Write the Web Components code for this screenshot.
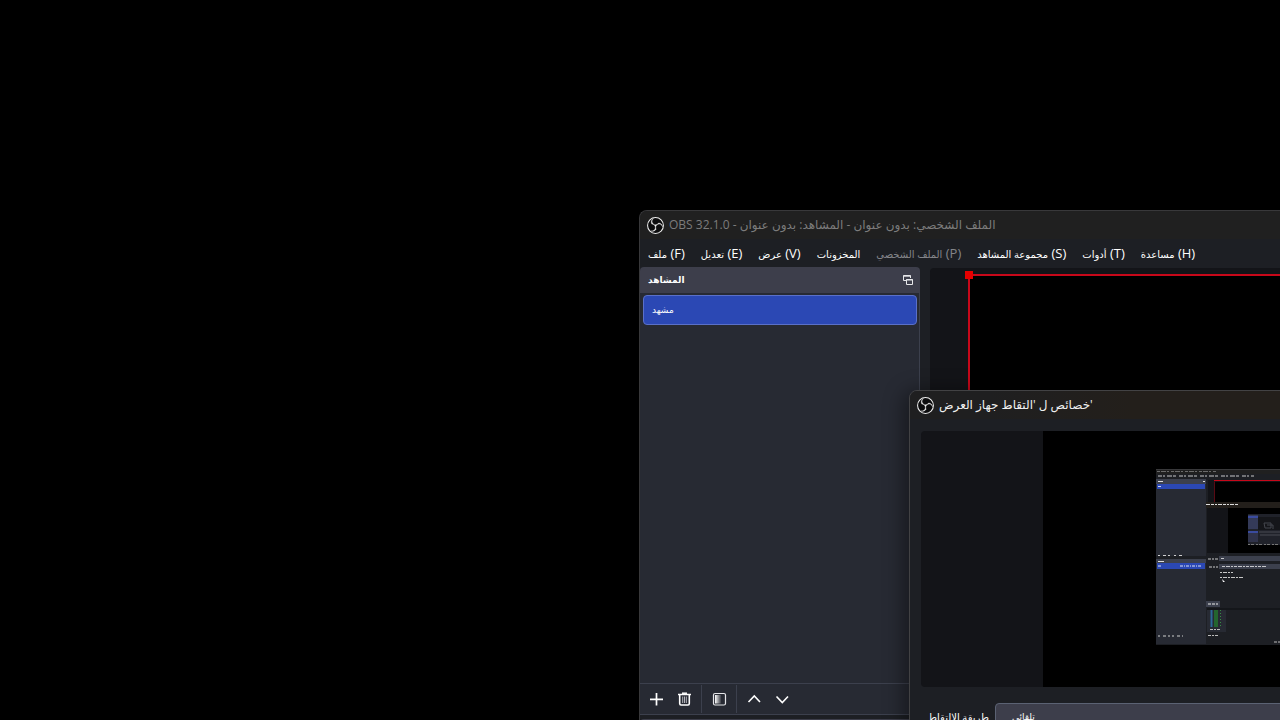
<!DOCTYPE html>
<html lang="ar" dir="ltr">
<head>
<meta charset="utf-8">
<title>OBS</title>
<style>
  html, body { margin: 0; height: 100%; background: #000; overflow: hidden; }
  body { font: 13px/20px "Open Sans", "DejaVu Sans", sans-serif; color: #fefefe; }
</style>
</head>
<body>
<obs-desktop>
  <obs-window>
    <window-title slot="title" muted>OBS 32.1.0 - <bdi dir="rtl">الملف الشخصي: بدون عنوان - المشاهد: بدون عنوان</bdi></window-title>
    <menu-bar slot="menu">
      <menu-item key="(F)">ملف</menu-item>
      <menu-item key="(E)">تعديل</menu-item>
      <menu-item key="(V)">عرض</menu-item>
      <menu-item>المخزونات</menu-item>
      <menu-item key="(P)" disabled>الملف الشخصي</menu-item>
      <menu-item key="(S)">مجموعة المشاهد</menu-item>
      <menu-item key="(T)">أدوات</menu-item>
      <menu-item key="(H)">مساعدة</menu-item>
    </menu-bar>
    <scenes-dock slot="dock" heading="المشاهد"><scene-row>مشهد</scene-row></scenes-dock>
    <canvas-preview></canvas-preview>
  </obs-window>
  <properties-dialog slot="dialog"></properties-dialog>
</obs-desktop>

<script>
function define(name, html, setup) {
  const t = document.createElement('template');
  t.innerHTML = html;
  customElements.define(name, class extends HTMLElement {
    constructor() {
      super();
      this.attachShadow({ mode: 'open' }).append(t.content.cloneNode(true));
    }
    connectedCallback() { if (setup) setup(this, this.shadowRoot); }
  });
}

define('obs-desktop', `
<style>
  :host { display: grid; grid-template-columns: 1fr 1fr; height: 100vh; padding-top: 210px; box-sizing: border-box; position: relative; overflow: hidden; background: #000; }
  .main { grid-column: 2; min-width: 0; margin-left: -1px; }
  .over { position: absolute; left: calc(50% + 269px); right: -40px; top: 390px; }
</style>
<div class="main"><slot></slot></div>
<div class="over"><slot name="dialog"></slot></div>`);

define('obs-window', `
<style>
  :host { display: block; }
  section { display: flex; flex-direction: column; height: 560px; border: 1px solid #38383a; border-right: 0; border-radius: 8px 0 0 0; overflow: hidden; background: #1d1f24; box-sizing: border-box; }
  .body { flex: 1; display: flex; gap: 10px; min-height: 0; }
</style>
<section>
  <slot name="title"></slot>
  <slot name="menu"></slot>
  <div class="body"><slot name="dock"></slot><slot></slot></div>
</section>`);

define('obs-logo', `
<style>:host { display: block; width: 17px; height: 17px; flex: none; } svg { display: block; }</style>
<svg width="17" height="17" viewBox="0 0 24 24" aria-hidden="true">
  <circle cx="12" cy="12" r="11.2" fill="#0c0c0d" stroke="#ececec" stroke-width="1.5"/>
  <path fill="#f4f4f4" stroke="#f4f4f4" stroke-width=".5" d="M6.182,5.99c0.352-1.698,1.503-3.229,3.05-3.996c-0.269,0.273-0.595,0.483-0.844,0.78c-1.02,1.1-1.48,2.692-1.199,4.156c0.355,2.235,2.455,4.06,4.732,4.028c1.765,0.079,3.485-0.937,4.348-2.468c1.848,0.063,3.645,1.017,4.7,2.548c0.54,0.799,0.962,1.736,0.991,2.711c-0.342-1.295-1.202-2.446-2.375-3.095c-1.135-0.639-2.529-0.802-3.772-0.425c-1.56,0.448-2.849,1.723-3.293,3.293c-0.377,1.25-0.216,2.628,0.377,3.772c-0.825,1.429-2.315,2.449-3.932,2.756c-1.244,0.261-2.551,0.059-3.709-0.464c1.036,0.302,2.161,0.355,3.191-0.011c1.381-0.457,2.522-1.567,3.024-2.935c0.556-1.49,0.345-3.261-0.591-4.54c-0.7-1.007-1.803-1.717-3.002-1.969c-0.38-0.068-0.764-0.098-1.148-0.134c-0.611-1.231-0.834-2.66-0.528-3.996z"/>
</svg>`);

define('window-title', `
<style>
  :host { display: flex; align-items: center; gap: 5px; height: 28px; padding-left: 7px; font-size: 12px; white-space: nowrap; background: #202020; color: #f0f0f0; }
  :host([muted]) { color: #7c7c7c; }
  :host([warm]) { background: linear-gradient(90deg, #1f1f20 80px, #231f1b 220px); }
</style>
<obs-logo></obs-logo><span><slot></slot></span>`);

define('menu-bar', `
<style>
  :host { display: block; background: #1d1f24; }
  nav { display: flex; gap: 16px; height: 28px; align-items: center; padding-left: 8px; }
</style>
<nav><slot></slot></nav>`);

define('menu-item', `
<style>
  :host { display: block; flex: none; }
  button { font: inherit; font-size: 13px; line-height: 20px; color: #fefefe; background: none; border: 0; padding: 0; white-space: nowrap; display: block; direction: ltr; }
  button:disabled { color: #84858a; }
  .ar { font-size: 10px; }
</style>
<button type="button"><span class="ar"><slot></slot></span><span class="key"></span></button>`, (host, root) => {
  const key = host.getAttribute('key');
  root.querySelector('.key').textContent = key ? ' ' + key : '';
  root.querySelector('button').disabled = host.hasAttribute('disabled');
});

define('scenes-dock', `
<style>
  :host { display: flex; flex-direction: column; width: 280px; flex: none; box-sizing: border-box; }
  header { display: flex; justify-content: space-between; align-items: center; height: 26px; padding: 0 6px 0 8px; background: #3d3e4b; border-radius: 4px 4px 0 0; }
  h2 { margin: 0; font-size: 9px; line-height: 20px; font-weight: 700; }
  header button { padding: 0; border: 0; background: none; display: block; }
  svg { display: block; }
  .list { height: 386px; border: solid #3c404d; border-width: 0 1px 1px 0; padding: 2px 2px 2px 3px; background: #272a33; box-sizing: content-box; }
  .tools { display: flex; align-items: center; height: 30px; padding-left: 2px; border: solid #3c404d; border-width: 0 1px 1px 0; background: #272a33; }
  .tools button { width: 28px; height: 28px; padding: 0; border: 0; background: none; display: grid; place-items: center; }
  .tools i { width: 1px; height: 28px; background: #3c404d; margin: 0 3px; }
  .next { margin-top: 4px; height: 40px; background: #3d3e4b; border-radius: 4px 4px 0 0; }
</style>
<header>
  <h2></h2>
  <button type="button" aria-label="فصل"><svg width="12" height="12" viewBox="0 0 12 12" fill="none" stroke="#e6e7ea"><path d="M4 6.5H1.5V1.5H8.5V4M1 2.2H9" /><path d="M4.5 5.5H10.5V10.5H4.5ZM4 6H11"/></svg></button>
</header>
<div class="list"><slot></slot></div>
<div class="tools">
  <button type="button" aria-label="إضافة"><svg width="16" height="16" viewBox="0 0 16 16" stroke="#fefefe" stroke-width="1.700"><path d="M8.500 2V14.500M2 8.300H15"/></svg></button>
  <button type="button" aria-label="حذف"><svg width="16" height="16" viewBox="0 0 16 16" fill="none" stroke="#fefefe"><path stroke-width="1.600" d="M2 3.500H15M3.700 4V12.500Q3.700 14 5 14H12Q13.300 14 13.300 12.500V4"/><path stroke-width="1.500" d="M6 2.200H11"/><path stroke="#b4b5bc" d="M6.700 5.500V12M8.500 5.500V12M10.300 5.500V12"/></svg></button>
  <i></i>
  <button type="button" aria-label="مرشحات"><svg width="16" height="16" viewBox="0 0 16 16"><defs><linearGradient id="g"><stop offset="0" stop-color="#fff"/><stop offset="1" stop-color="#fff" stop-opacity=".1"/></linearGradient></defs><rect x="2.500" y="2.500" width="12" height="11.500" rx="1.500" fill="none" stroke="#e4e5e8" stroke-width="1.200"/><rect x="4" y="4" width="6" height="8.500" fill="url(#g)"/></svg></button>
  <i></i>
  <button type="button" aria-label="أعلى"><svg width="16" height="16" viewBox="0 0 16 16" fill="none" stroke="#fefefe" stroke-width="1.600"><path d="M2.500 11L8.300 5L14 11"/></svg></button>
  <button type="button" aria-label="أسفل"><svg width="16" height="16" viewBox="0 0 16 16" fill="none" stroke="#fefefe" stroke-width="1.600"><path d="M2.500 5.500L8.300 11.500L14 5.500"/></svg></button>
</div>
<div class="next"></div>`, (host, root) => {
  root.querySelector('h2').textContent = host.getAttribute('heading');
});

define('scene-row', `
<style>
  :host { display: block; }
  button { display: block; width: 100%; height: 30px; padding: 0 8px; text-align: left; font: inherit; font-size: 9px; line-height: 20px; color: #fefefe; background: #2b48b4; border: 1px solid #5a70c8; border-radius: 4px; }
</style>
<button type="button" aria-pressed="true"><slot></slot></button>`);

define('canvas-preview', `
<style>
  :host { display: block; flex: 1; min-width: 0; background: #131418; border-radius: 4px 0 0 0; margin-top: 1px; padding: 6px 0 0 38px; }
  .frame { position: relative; height: 400px; background: #000; border: solid #c8081a; border-width: 2px 0 0 2px; box-sizing: border-box; }
  .handle { position: absolute; left: -5px; top: -5px; width: 8px; height: 8px; background: #e60000; }
</style>
<div class="frame"><div class="handle"></div></div>`);

define('mini-capture', `
<style>:host { display: block; } svg { display: block; }</style>
<svg width="132" height="176" viewBox="0 0 132 176" aria-hidden="true">
  <rect width="132" height="176" fill="#1d1f24"/>
  <rect width="132" height="5" fill="#202020"/>
  <path d="M0 .5H132" stroke="#38383a"/>
  <path d="M1 2.500H60" stroke="#6b6b6b" stroke-dasharray="3 1 5 1 2 2"/>
  <path d="M2 7H98" stroke="#c8c8c8" stroke-dasharray="4 1 2 2 5 1 3 3"/>
  <rect y="10" width="50" height="77" fill="#272a33"/>
  <rect y="10" width="50" height="5" fill="#3c404d"/>
  <path d="M2 12.500H7M47 12.500H49" stroke="#ddd"/>
  <rect x="1" y="15" width="48" height="5" fill="#2b48b4"/>
  <path d="M2 17.500H5" stroke="#cdd3ee"/>
  <path d="M2 86.500H27" stroke="#d0d0d0" stroke-dasharray="2 3 3 2 2 4"/>
  <rect y="90" width="50" height="85" fill="#272a33"/>
  <rect y="90" width="50" height="4" fill="#3c404d"/>
  <path d="M2 92.500H8" stroke="#ddd"/>
  <rect x="1" y="94" width="48" height="6" fill="#2b48b4"/>
  <path d="M2 97H5M24 97H46" stroke="#dfe3f5" stroke-dasharray="3 1 1 1"/>
  <path d="M2 167H27" stroke="#d0d0d0" stroke-dasharray="2 3 3 2 2 2"/>
  <rect x="52" y="11" width="80" height="22" fill="#131418"/>
  <rect x="59" y="13" width="73" height="20" fill="#000"/>
  <path d="M58.500 33V12.500" stroke="#5a0a14" fill="none"/>
  <path d="M58 11.500H132" stroke="#c8081a" fill="none"/>
  <rect x="50" y="33" width="82" height="107" fill="#1d1f24"/>
  <rect x="50" y="33" width="82" height="6" fill="#231f1b"/>
  <path d="M50 35.500H82" stroke="#ddd" stroke-dasharray="4 1 3 1 2 1"/>
  <rect x="51" y="39" width="81" height="45" fill="#131418"/>
  <rect x="72" y="39" width="60" height="45" fill="#000"/>
  <g>
    <rect x="92" y="45" width="40" height="31" fill="#20222a"/>
    <rect x="92" y="46" width="10" height="14" fill="#343a58"/>
    <rect x="92" y="62" width="10" height="11" fill="#30334a"/>
    <rect x="92" y="47" width="10" height="2" fill="#3a4b9e"/>
    <rect x="92" y="62" width="10" height="2" fill="#3a4b9e"/>
    <rect x="102" y="48" width="30" height="13" fill="#15161a"/>
    <path d="M108 54H115V59H109ZM111 56H117V60" stroke="#45474e" fill="none"/>
    <path d="M103 63H132M104 66H132" stroke="#494b53"/>
    <path d="M92 75.500H132" stroke="#777" stroke-dasharray="2 1 3 2"/>
  </g>
  <path d="M52 90H62M53 98H62" stroke="#ccc" stroke-dasharray="3 1 2 1"/>
  <rect x="63" y="87" width="69" height="5" fill="#3c404d"/>
  <rect x="63" y="95" width="69" height="5" fill="#3c404d"/>
  <path d="M65 89.500H69M66 97.500H111" stroke="#c6c7cb" stroke-dasharray="3 1 4 1 2 1"/>
  <path d="M64 103.500H77M64 108.500H88" stroke="#c8c8c8" stroke-dasharray="2 1 4 1"/>
  <path d="M66 110L69 113L67 113Z" fill="#fff"/>
  <rect x="50" y="132" width="14" height="6" fill="#3c404d"/>
  <path d="M52 135H62" stroke="#eee" stroke-dasharray="3 1"/>
  <path d="M51 140H132" stroke="#0d0e10"/>
  <rect x="51" y="141" width="19" height="22" fill="#272a33"/>
  <path d="M55.500 141V158" stroke="#2d6798" stroke-width="2"/>
  <path d="M60 141V158" stroke="#24652f" stroke-width="4"/>
  <path d="M64.500 141V158" stroke="#368b44" stroke-dasharray="1 2"/>
  <path d="M54 160.500H64M52 166.500H63M118 173H132" stroke="#bbb" stroke-dasharray="3 1 2 1"/>
</svg>`);

define('properties-dialog', `
<style>
  :host { display: block; border-radius: 8px; box-shadow: 0 6px 20px 6px rgba(0,0,0,.4); }
  section { height: 420px; box-sizing: border-box; border: 1px solid #424244; border-radius: 8px; background: #1d1f24; overflow: hidden; }
  .body { padding: 12px 11px; display: flex; flex-direction: column; gap: 16px; }
  .preview { display: flex; height: 256px; padding-left: 122px; background: #131418; border-radius: 4px; overflow: hidden; }
  .black { flex: 1; min-width: 0; overflow: hidden; background: #000; padding: 38px 0 0 113px; }
  form { display: grid; grid-template-columns: 68px 1fr; column-gap: 6px; align-items: center; }
  label { font-size: 10px; line-height: 20px; text-align: right; white-space: nowrap; }
  select { appearance: none; height: 28px; width: 100%; box-sizing: border-box; padding: 0 16px; font: inherit; font-size: 9px; line-height: 20px; color: #fefefe; background: #3d3e4b; border: 1px solid #5b6273; border-radius: 4px; }
</style>
<section role="dialog" aria-labelledby="t">
  <window-title id="t" warm><bdi dir="ltr">خصائص ل 'التقاط جهاز العرض'</bdi></window-title>
  <div class="body">
    <div class="preview"><div class="black"><mini-capture></mini-capture></div></div>
    <form>
      <label for="method">طريقة الالتقاط</label>
      <select id="method"><option>تلقائي</option></select>
    </form>
  </div>
</section>`);
</script>
</body>
</html>
